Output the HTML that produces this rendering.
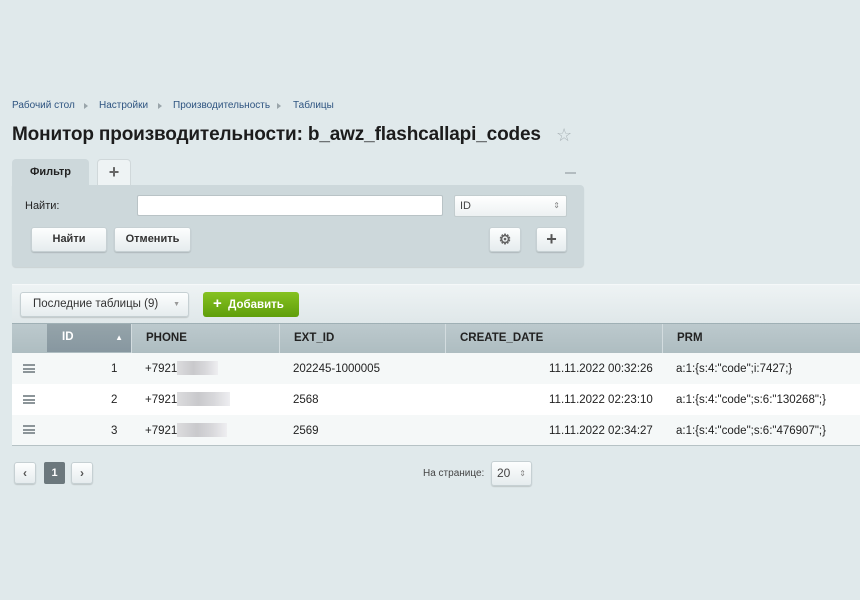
<!DOCTYPE html>
<html><head><meta charset="utf-8"><style>
*{margin:0;padding:0;box-sizing:border-box}
body{width:860px;height:600px;background:#e0e9eb;font-family:"Liberation Sans",sans-serif;position:relative;overflow:hidden;color:#222}
.a{position:absolute}
.bc{font-size:10px;color:#2e5480;top:100px}
.arr{width:0;height:0;border-left:4px solid #9aa5aa;border-top:3px solid transparent;border-bottom:3px solid transparent;top:103px}
.btn{position:absolute;background:linear-gradient(#fdfefe,#e6ecee);border:1px solid #c6d0d3;border-radius:3px;box-shadow:0 1px 1px rgba(0,0,0,.15);font-size:11px;font-weight:bold;color:#333;text-align:center}
.th{position:absolute;top:324px;height:29px;font-size:11.5px;font-weight:bold;color:#222;line-height:29px;border-left:1px solid #d3dcdf}
.td{position:absolute;font-size:11.5px;color:#222}
.row{position:absolute;left:12px;width:848px;height:31px}
.ham{position:absolute;left:23px;width:12px;height:9px;border-top:2px solid #8c9599;border-bottom:2px solid #8c9599}
.ham:after{content:"";position:absolute;left:0;right:0;top:1.5px;height:2px;background:#8c9599}
.blur{position:absolute;height:14px;background:linear-gradient(90deg,#dcdcde,#c9c9cc 40%,#d8d8db 70%,#eeeef1)}
</style></head><body>
<div class="a bc" style="left:12px">Рабочий стол</div>
<div class="a arr" style="left:84px"></div>
<div class="a bc" style="left:99px">Настройки</div>
<div class="a arr" style="left:158px"></div>
<div class="a bc" style="left:173px">Производительность</div>
<div class="a arr" style="left:277px"></div>
<div class="a bc" style="left:293px">Таблицы</div>
<div class="a" style="left:12px;top:124px;font-size:19px;font-weight:bold;color:#1c1c1c;letter-spacing:-0.15px">Монитор производительности: b_awz_flashcallapi_codes</div>
<div class="a" style="left:556px;top:125px;font-size:18px;color:#a9b2b6">☆</div>

<div class="a" style="left:12px;top:159px;width:77px;height:27px;background:#cdd8db;border-radius:4px 4px 0 0;font-size:11px;font-weight:bold;line-height:26px;text-align:center">Фильтр</div>
<div class="a" style="left:97px;top:159px;width:34px;height:26px;background:#eef3f4;border-radius:4px 4px 0 0;border:1px solid #d0d8da;border-bottom:none;font-size:18px;font-weight:bold;color:#666;text-align:center;line-height:25px">+</div>
<div class="a" style="left:565px;top:172px;width:11px;height:2px;background:#b3bcc0"></div>
<div class="a" style="left:12px;top:185px;width:572px;height:82px;background:#cdd8db;border-radius:0 4px 4px 4px;box-shadow:0 1px 1px rgba(0,0,0,.1)"></div>
<div class="a" style="left:25px;top:200px;font-size:11px;color:#222">Найти:</div>
<div class="a" style="left:137px;top:195px;width:306px;height:21px;background:#fff;border:1px solid #b9c3c6;border-radius:2px"></div>
<div class="a" style="left:454px;top:195px;width:113px;height:22px;background:linear-gradient(#fff,#edf1f2);border:1px solid #c2ccce;border-radius:2px;font-size:11px;color:#444;line-height:20px;padding-left:5px">ID<span style="position:absolute;right:6px;top:0;font-size:8px;color:#888">⇕</span></div>
<div class="btn" style="left:31px;top:227px;width:76px;height:25px;line-height:23px">Найти</div>
<div class="btn" style="left:114px;top:227px;width:77px;height:25px;line-height:23px">Отменить</div>
<div class="btn" style="left:489px;top:227px;width:32px;height:25px;line-height:23px;font-size:14px;color:#666">⚙</div>
<div class="btn" style="left:536px;top:227px;width:31px;height:25px;line-height:22px;font-size:18px;color:#555">+</div>

<div class="a" style="left:12px;top:284px;width:848px;height:40px;background:linear-gradient(#eef3f4,#dfe7e9);border-top:1px solid #f5f8f9"></div>
<div class="btn" style="left:20px;top:292px;width:169px;height:25px;line-height:23px;font-weight:normal;font-size:11.5px;text-align:left;padding-left:12px;color:#333">Последние таблицы (9)<span style="position:absolute;right:8px;top:0;font-size:7px;color:#999">▼</span></div>
<div class="a" style="left:203px;top:292px;width:96px;height:25px;background:linear-gradient(#86c221,#5f9e0a);border-radius:3px;color:#fff;font-size:11.5px;font-weight:bold;line-height:24px;padding-left:10px"><b style="font-size:15px">+</b>&nbsp; Добавить</div>

<div class="a" style="left:12px;top:323px;width:848px;height:30px;background:linear-gradient(#bcc9cd,#aebdc1);border-top:1px solid #9fb0b5"></div>
<div class="a" style="left:47px;top:324px;width:84px;height:28px;background:linear-gradient(#95a4aa,#8797a0);color:#fff;font-size:11.5px;font-weight:bold;line-height:27px;padding-left:15px">ID<span style="position:absolute;right:8px;font-size:8px">▲</span></div>
<div class="th" style="left:131px;padding-left:14px">PHONE</div>
<div class="th" style="left:279px;padding-left:14px">EXT_ID</div>
<div class="th" style="left:445px;padding-left:14px">CREATE_DATE</div>
<div class="th" style="left:662px;padding-left:14px">PRM</div>

<div class="row" style="top:353px;background:#f5f8f8"></div>
<div class="row" style="top:384px;background:#fff"></div>
<div class="row" style="top:415px;background:#f5f8f8;height:30px"></div>
<div class="a" style="left:12px;top:445px;width:848px;height:1px;background:#b6c2c5"></div>

<div class="ham" style="top:364px"></div><div class="ham" style="top:395px"></div><div class="ham" style="top:425px"></div>
<div class="td" style="left:111px;top:363px">1</div>
<div class="td" style="left:111px;top:394px">2</div>
<div class="td" style="left:111px;top:425px">3</div>
<div class="td" style="left:145px;top:363px">+7921</div><div class="blur" style="left:177px;top:361px;width:41px"></div>
<div class="td" style="left:145px;top:394px">+7921</div><div class="blur" style="left:177px;top:392px;width:53px"></div>
<div class="td" style="left:145px;top:425px">+7921</div><div class="blur" style="left:177px;top:423px;width:50px"></div>
<div class="td" style="left:293px;top:363px">202245-1000005</div>
<div class="td" style="left:293px;top:394px">2568</div>
<div class="td" style="left:293px;top:425px">2569</div>
<div class="td" style="left:549px;top:363px">11.11.2022 00:32:26</div>
<div class="td" style="left:549px;top:394px">11.11.2022 02:23:10</div>
<div class="td" style="left:549px;top:425px">11.11.2022 02:34:27</div>
<div class="td" style="left:676px;top:363px">a:1:{s:4:"code";i:7427;}</div>
<div class="td" style="left:676px;top:394px">a:1:{s:4:"code";s:6:"130268";}</div>
<div class="td" style="left:676px;top:425px">a:1:{s:4:"code";s:6:"476907";}</div>

<div class="btn" style="left:14px;top:462px;width:22px;height:22px;line-height:20px;font-size:12px;color:#555">‹</div>
<div class="a" style="left:44px;top:462px;width:21px;height:22px;background:#6c787d;border-radius:2px;color:#fff;font-size:11px;font-weight:bold;text-align:center;line-height:22px">1</div>
<div class="btn" style="left:71px;top:462px;width:22px;height:22px;line-height:20px;font-size:12px;color:#555">›</div>
<div class="a" style="left:423px;top:468px;font-size:10px;color:#444">На странице:</div>
<div class="btn" style="left:491px;top:461px;width:41px;height:25px;line-height:23px;font-weight:normal;font-size:12px;text-align:left;padding-left:5px;color:#444">20<span style="position:absolute;right:5px;font-size:8px;color:#888">⇕</span></div>
</body></html>
